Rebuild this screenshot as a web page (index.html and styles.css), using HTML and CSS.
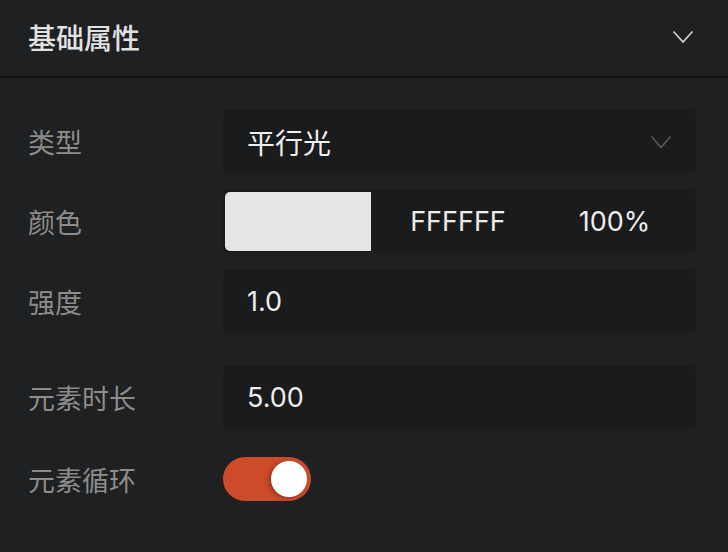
FILE: index.html
```html
<!DOCTYPE html>
<html lang="zh-CN">
<head>
    <meta charset="UTF-8">
    <meta name="viewport" content="width=device-width, initial-scale=1.0">
    <title>基础属性</title>
    <link rel="stylesheet" href="styles.css">
</head>
<body>
    <div class="panel">
        <!-- Section header -->
        <div class="panel-header">
            <span class="panel-title">基础属性</span>
            <svg class="header-chevron" width="22" height="14" viewBox="0 0 22 14">
                <path d="M1.5 1.5 L11 12 L20.5 1.5" fill="none" stroke="currentColor" stroke-width="1.6"/>
            </svg>
        </div>

        <div class="panel-body">
            <div class="row">
                <div class="label">类型</div>
                <div class="field select">
                    <span class="value">平行光</span>
                    <svg class="select-chevron" width="22" height="14" viewBox="0 0 22 14">
                        <path d="M1.5 1.5 L11 12.5 L20.5 1.5" fill="none" stroke="currentColor" stroke-width="1.6"/>
                    </svg>
                </div>
            </div>

            <div class="row">
                <div class="label">颜色</div>
                <div class="field color">
                    <div class="swatch"></div>
                    <span class="hex">FFFFFF</span>
                    <span class="alpha">100%</span>
                </div>
            </div>

            <div class="row">
                <div class="label">强度</div>
                <div class="field">
                    <span class="value num">1.0</span>
                </div>
            </div>

            <div class="row group-start">
                <div class="label">元素时长</div>
                <div class="field">
                    <span class="value num">5.00</span>
                </div>
            </div>

            <div class="row toggle-row">
                <div class="label">元素循环</div>
                <div class="toggle on">
                    <div class="knob"></div>
                </div>
            </div>
        </div>
    </div>
</body>
</html>
```

FILE: styles.css
```css
* {
    margin: 0;
    padding: 0;
    box-sizing: border-box;
}

body {
    background: #1f2022;
    font-family: 'Noto Sans CJK SC', 'Noto Sans', sans-serif;
    color: #e6e6e6;
    width: 728px;
    height: 552px;
    overflow: hidden;
}

.panel-header {
    height: 78px;
    display: flex;
    align-items: center;
    justify-content: space-between;
    padding: 0 34px 2px 28px;
    border-bottom: 2px solid #121315;
}

.panel-title {
    font-size: 28px;
    font-weight: 500;
    color: #e2e2e2;
    line-height: 1;
}

.header-chevron {
    color: #d6d6d6;
}

.panel-body {
    padding: 32px 32px 0 28px;
    display: flex;
    flex-direction: column;
    gap: 17px;
}

.row {
    display: grid;
    grid-template-columns: 195px 1fr;
    align-items: center;
    min-height: 63px;
}

.group-start {
    margin-top: 16px;
}

.toggle-row {
    min-height: 44px;
    margin-top: 11px;
}

.label {
    font-size: 27px;
    color: #8c8c8c;
    line-height: 1;
}

.field {
    height: 63px;
    background: #1a1b1d;
    border-radius: 6px;
    display: flex;
    align-items: center;
    padding: 0 24px;
}

.value {
    font-size: 28px;
    color: #f0f0f0;
    line-height: 1;
}

.num, .hex, .alpha {
    font-family: 'Inter', 'Liberation Sans', sans-serif;
    font-size: 27px;
    color: #ececec;
}

.select {
    justify-content: space-between;
    padding-right: 24px;
}

.select-chevron {
    color: #5a5a5c;
}

.color {
    display: grid;
    grid-template-columns: 146px 174px 1fr;
    padding: 2px;
    height: 63px;
}

.swatch {
    height: 100%;
    background: #e6e5e3;
    border-radius: 5px 0 0 5px;
}

.hex, .alpha {
    text-align: center;
    line-height: 1;
}

.alpha {
    padding-right: 10px;
}

.toggle {
    width: 88px;
    height: 44px;
    border-radius: 22px;
    background: #cc4b2b;
    display: flex;
    align-items: center;
    padding: 0 4px;
}

.toggle.on {
    justify-content: flex-end;
}

.knob {
    width: 36px;
    height: 36px;
    border-radius: 50%;
    background: #ffffff;
    box-shadow: -2px 1px 4px rgba(0, 0, 0, 0.3);
}
```
